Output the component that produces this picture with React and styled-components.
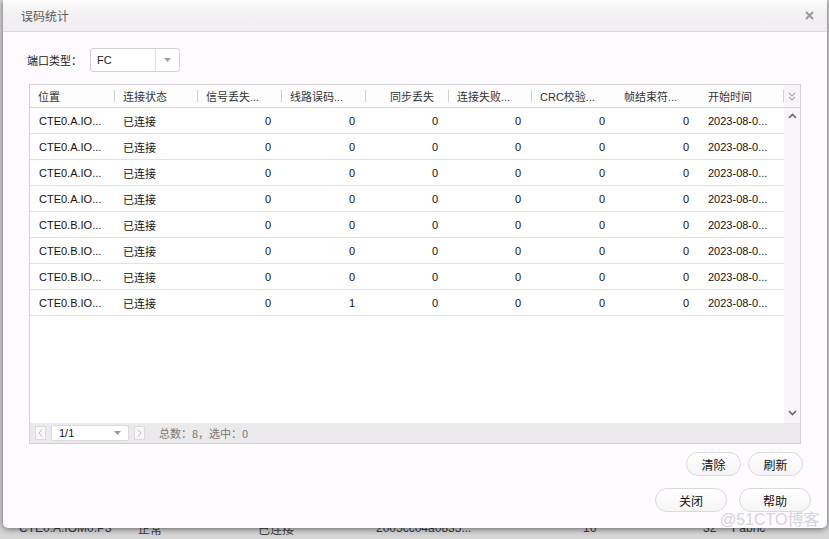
import React from "react";
import styled, { createGlobalStyle } from "styled-components";

const GlobalStyle = createGlobalStyle`
  html, body { margin: 0; padding: 0; overflow: hidden; }
  body { font-family: "Liberation Sans", "Noto Sans CJK SC", sans-serif; }
  * { box-sizing: border-box; }
`;

const FONT = `"Liberation Sans", "Noto Sans CJK SC", sans-serif`;

const Page = styled.div`
  position: relative;
  width: 829px;
  height: 539px;
  background: #d6d6d6;
  overflow: hidden;
  display: flex;
  flex-direction: column;
  justify-content: flex-end;
  font-family: ${FONT};
`;

const BgRow = styled.div`
  height: 18px;
  display: flex;
  align-items: center;
  padding: 0 0 4px 19px;
  font-size: 12px;
  color: #3a3a3a;
  white-space: nowrap;
`;

const BgCell = styled.span`
  width: ${(p) => p.$w}px;
  flex: none;
`;

const Dialog = styled.div`
  position: absolute;
  left: 3px;
  top: 0;
  width: 824px;
  height: 528px;
  background: #fdfbfd;
  border-radius: 0 0 5px 5px;
  box-shadow: 0 1px 6px rgba(0, 0, 0, 0.55);
  display: flex;
  flex-direction: column;
`;

const TitleBar = styled.div`
  height: 32px;
  flex: none;
  display: flex;
  align-items: center;
  justify-content: space-between;
  padding: 0 13px 0 18px;
  border-bottom: 1px solid #dcdadc;
  background: linear-gradient(to bottom, #fdfcfd 0%, #f3f1f3 40%, #efedef 100%);
`;

const Title = styled.span`
  font-size: 12px;
  color: #5a5a5a;
  font-family: "Noto Sans CJK SC", sans-serif;
`;

const CloseIcon = styled.svg`
  width: 9px;
  height: 9px;
  display: block;
`;

const PortRow = styled.div`
  margin-top: 16px;
  height: 24px;
  display: flex;
  align-items: center;
  gap: 8px;
  padding-left: 24px;
`;

const Label = styled.span`
  font-size: 11px;
  color: #222;
  font-family: "Noto Sans CJK SC", sans-serif;
`;

const SelectBox = styled.div`
  width: 90px;
  height: 24px;
  border: 1px solid #d3d1d3;
  border-radius: 3px;
  background: #fff;
  display: flex;
  align-items: stretch;
`;

const SelectText = styled.div`
  flex: 1;
  display: flex;
  align-items: center;
  padding-left: 6px;
  font-size: 11px;
  color: #222;
  border-right: 1px solid #dedede;
`;

const SelectArrow = styled.div`
  width: 23px;
  display: flex;
  align-items: center;
  justify-content: center;
`;

const TableBox = styled.div`
  margin: 12px 26px 0 26px;
  border: 1px solid #d2d0d2;
  background: #fff;
  display: flex;
  flex-direction: column;
`;

const COLS = "85px 83px 84px 84px 83px 83px 84px 84px 84px 16px";

const HeaderRow = styled.div`
  height: 23px;
  display: grid;
  grid-template-columns: ${COLS};
  border-bottom: 1px solid #d6d4d6;
  background: #fdfdfd;
`;

const HeaderCell = styled.div`
  display: flex;
  align-items: center;
  justify-content: ${(p) => (p.$right ? "flex-end" : "flex-start")};
  padding: ${(p) => (p.$right ? "0 15px 0 0" : "0 0 0 8px")};
  font-size: 11px;
  color: #333;
  white-space: nowrap;
  overflow: hidden;
  background: ${(p) =>
    p.$sep
      ? "linear-gradient(#cfcfcf, #cfcfcf) right center / 1px 12px no-repeat"
      : "none"};
`;

const HeaderScroll = styled.div`
  display: flex;
  align-items: center;
  justify-content: center;
  background: #f7f5f7;
`;

const BodyArea = styled.div`
  height: 315px;
  display: flex;
`;

const Rows = styled.div`
  width: 754px;
  background: #fff;
`;

const DataRow = styled.div`
  height: 26px;
  display: grid;
  grid-template-columns: 85px 83px 84px 84px 83px 83px 84px 84px 84px;
  border-bottom: 1px solid #e2e0e2;
`;

const Cell = styled.div`
  display: flex;
  align-items: center;
  justify-content: ${(p) => (p.$num ? "flex-end" : "flex-start")};
  padding: ${(p) => (p.$num ? "0 11px 0 0" : `0 0 0 ${p.$pl || 8}px`)};
  font-size: 11px;
  color: #111;
  white-space: nowrap;
  overflow: hidden;
`;

const ScrollTrack = styled.div`
  flex: 1;
  background: #f7f5f7;
  display: flex;
  flex-direction: column;
  align-items: center;
  justify-content: space-between;
  padding: 5px 0 7px 0;
`;

const Footer = styled.div`
  height: 20px;
  background: #ebe9eb;
  display: flex;
  align-items: center;
  padding-left: 5px;
  gap: 5px;
`;

const PagerArrow = styled.div`
  width: 11px;
  height: 14px;
  border: 1px solid #dcdadc;
  background: #f8f7f8;
  display: flex;
  align-items: center;
  justify-content: center;
`;

const PageSelect = styled.div`
  width: 78px;
  height: 16px;
  background: #fff;
  border: 1px solid #dcdadc;
  border-radius: 2px;
  display: flex;
  align-items: center;
  justify-content: space-between;
  padding: 0 7px 0 7px;
  font-size: 11px;
  color: #111;
`;

const FooterText = styled.span`
  margin-left: 9px;
  font-size: 11px;
  color: #777;
  font-family: "Noto Sans CJK SC", sans-serif;
`;

const ButtonRow = styled.div`
  margin-top: ${(p) => p.$mt}px;
  height: 24px;
  display: flex;
  justify-content: flex-end;
  gap: ${(p) => p.$gap}px;
  padding-right: ${(p) => p.$pr}px;
`;

const Button = styled.button`
  width: ${(p) => p.$w}px;
  height: 24px;
  border: 1px solid #dad8da;
  border-radius: 12px;
  background: linear-gradient(to bottom, #ffffff, #f6f5f6);
  font-family: "Noto Sans CJK SC", sans-serif;
  font-size: 12px;
  color: #111;
  padding: 0;
  display: flex;
  align-items: center;
  justify-content: center;
  cursor: pointer;
`;

const Watermark = styled.div`
  position: absolute;
  left: 720px;
  top: 506px;
  font-size: 16px;
  color: #d6d4d6;
  font-family: ${FONT};
  white-space: nowrap;
  pointer-events: none;
`;

const Tri = ({ color = "#999" }) => (
  <svg width="7" height="4" viewBox="0 0 7 4" style={{ display: "block" }}>
    <polygon points="0,0 7,0 3.5,4" fill={color} />
  </svg>
);

const ChevUp = () => (
  <svg width="9" height="6" viewBox="0 0 9 6" style={{ display: "block" }}>
    <polyline points="1,5 4.5,1.5 8,5" fill="none" stroke="#666" strokeWidth="1.6" />
  </svg>
);

const ChevDown = () => (
  <svg width="9" height="6" viewBox="0 0 9 6" style={{ display: "block" }}>
    <polyline points="1,1 4.5,4.5 8,1" fill="none" stroke="#666" strokeWidth="1.6" />
  </svg>
);

const DoubleDown = () => (
  <svg width="8" height="9" viewBox="0 0 8 9" style={{ display: "block" }}>
    <polyline points="1,1 4,4 7,1" fill="none" stroke="#aaa" strokeWidth="1.1" />
    <polyline points="1,5 4,8 7,5" fill="none" stroke="#aaa" strokeWidth="1.1" />
  </svg>
);

const SmallChev = ({ dir }) => (
  <svg width="5" height="8" viewBox="0 0 5 8" style={{ display: "block" }}>
    <polyline
      points={dir === "left" ? "4,0.5 1,4 4,7.5" : "1,0.5 4,4 1,7.5"}
      fill="none"
      stroke="#bbb"
      strokeWidth="1"
    />
  </svg>
);

const headers = [
  { t: "位置", sep: true },
  { t: "连接状态", sep: true },
  { t: "信号丢失...", sep: true },
  { t: "线路误码...", sep: true },
  { t: "同步丢失", sep: true, right: true },
  { t: "连接失败...", sep: true },
  { t: "CRC校验...", sep: false },
  { t: "帧结束符...", sep: false },
  { t: "开始时间", sep: true },
];

const rows = [
  { pos: "CTE0.A.IO...", n: [0, 0, 0, 0, 0, 0] },
  { pos: "CTE0.A.IO...", n: [0, 0, 0, 0, 0, 0] },
  { pos: "CTE0.A.IO...", n: [0, 0, 0, 0, 0, 0] },
  { pos: "CTE0.A.IO...", n: [0, 0, 0, 0, 0, 0] },
  { pos: "CTE0.B.IO...", n: [0, 0, 0, 0, 0, 0] },
  { pos: "CTE0.B.IO...", n: [0, 0, 0, 0, 0, 0] },
  { pos: "CTE0.B.IO...", n: [0, 0, 0, 0, 0, 0] },
  { pos: "CTE0.B.IO...", n: [0, 1, 0, 0, 0, 0] },
];

export default function App() {
  return (
    <>
      <GlobalStyle />
      <Page>
        <BgRow>
          <BgCell $w={119}>CTE0.A.IOM0.P3</BgCell>
          <BgCell $w={120}>正常</BgCell>
          <BgCell $w={118}>已连接</BgCell>
          <BgCell $w={207}>2005cc04a0835...</BgCell>
          <BgCell $w={120}>16</BgCell>
          <BgCell $w={29}>32</BgCell>
          <BgCell $w={80}>Fabric</BgCell>
        </BgRow>

        <Dialog>
          <TitleBar>
            <Title>误码统计</Title>
            <CloseIcon viewBox="0 0 9 9">
              <path d="M1 1 L8 8 M8 1 L1 8" stroke="#9a9a9a" strokeWidth="2" />
            </CloseIcon>
          </TitleBar>

          <PortRow>
            <Label>端口类型：</Label>
            <SelectBox>
              <SelectText>FC</SelectText>
              <SelectArrow>
                <Tri color="#a0a0a0" />
              </SelectArrow>
            </SelectBox>
          </PortRow>

          <TableBox>
            <HeaderRow>
              {headers.map((h, i) => (
                <HeaderCell key={i} $sep={h.sep} $right={h.right}>
                  {h.t}
                </HeaderCell>
              ))}
              <HeaderScroll>
                <DoubleDown />
              </HeaderScroll>
            </HeaderRow>

            <BodyArea>
              <Rows>
                {rows.map((r, i) => (
                  <DataRow key={i}>
                    <Cell $pl={9}>{r.pos}</Cell>
                    <Cell>已连接</Cell>
                    {r.n.map((v, j) => (
                      <Cell key={j} $num>
                        {v}
                      </Cell>
                    ))}
                    <Cell>2023-08-0...</Cell>
                  </DataRow>
                ))}
              </Rows>
              <ScrollTrack>
                <ChevUp />
                <ChevDown />
              </ScrollTrack>
            </BodyArea>

            <Footer>
              <PagerArrow>
                <SmallChev dir="left" />
              </PagerArrow>
              <PageSelect>
                <span>1/1</span>
                <Tri color="#999" />
              </PageSelect>
              <PagerArrow>
                <SmallChev dir="right" />
              </PagerArrow>
              <FooterText>总数：8，选中：0</FooterText>
            </Footer>
          </TableBox>

          <ButtonRow $mt={8} $gap={7} $pr={24}>
            <Button $w={55}>清除</Button>
            <Button $w={55}>刷新</Button>
          </ButtonRow>
          <ButtonRow $mt={12} $gap={12} $pr={16}>
            <Button $w={72}>关闭</Button>
            <Button $w={72}>帮助</Button>
          </ButtonRow>
        </Dialog>

        <Watermark>@51CTO博客</Watermark>
      </Page>
    </>
  );
}
